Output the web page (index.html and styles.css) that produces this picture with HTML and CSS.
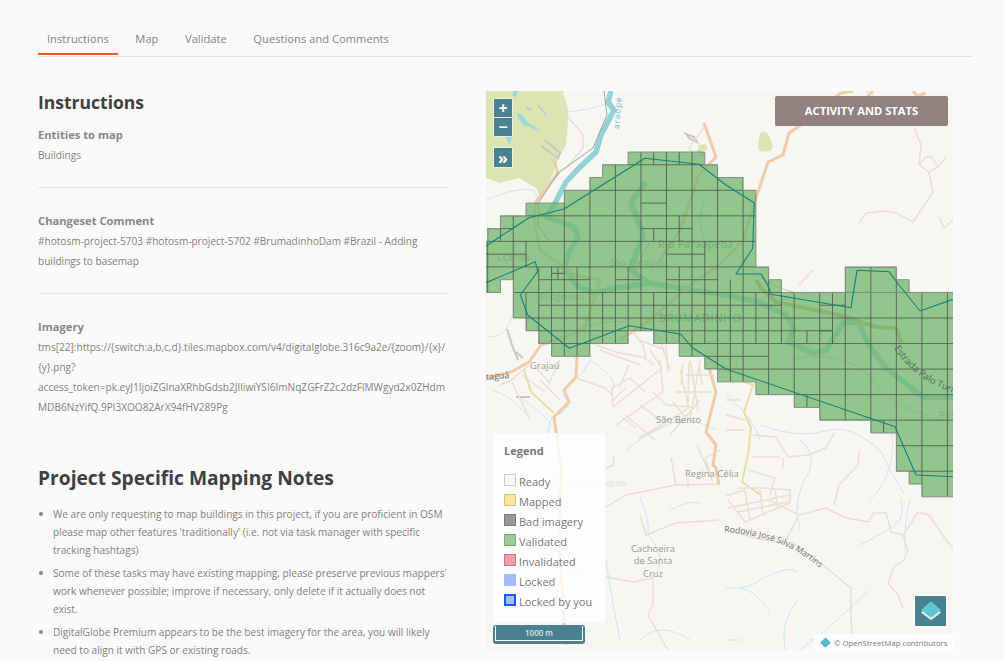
FILE: index.html
```html
<!DOCTYPE html>
<html lang="en">
<head>
    <meta charset="UTF-8">
    <title>Project - Instructions</title>
    <link rel="stylesheet" href="styles.css">
</head>
<body>
    <div class="page">
        <nav class="tabs">
            <a class="tab active">Instructions</a>
            <a class="tab">Map</a>
            <a class="tab">Validate</a>
            <a class="tab">Questions and Comments</a>
        </nav>
        <div class="main">
            <section class="details">
                <h2 class="title">Instructions</h2>
                <div class="block">
                    <h4>Entities to map</h4>
                    <p>Buildings</p>
                </div>
                <div class="block">
                    <h4>Changeset Comment</h4>
                    <p>#hotosm-project-5703 #hotosm-project-5702 #BrumadinhoDam #Brazil - Adding buildings to basemap</p>
                </div>
                <div class="block last">
                    <h4>Imagery</h4>
                    <p class="imagery">tms[22]:https://{switch:a,b,c,d}.tiles.mapbox.com/v4/digitalglobe.316c9a2e/{zoom}/{x}/<br>{y}.png?<br>access_token=pk.eyJ1IjoiZGlnaXRhbGdsb2JlIiwiYSI6ImNqZGFrZ2c2dzFlMWgyd2x0ZHdm<br>MDB6NzYifQ.9Pl3XOO82ArX94fHV289Pg</p>
                </div>
                <h2 class="title notes-title">Project Specific Mapping Notes</h2>
                <ul class="notes">
                    <li>We are only requesting to map buildings in this project, if you are proficient in OSM please map other features 'traditionally' (i.e. not via task manager with specific tracking hashtags)</li>
                    <li>Some of these tasks may have existing mapping, please preserve previous mappers' work whenever possible; improve if necessary, only delete if it actually does not exist.</li>
                    <li>DigitalGlobe Premium appears to be the best imagery for the area, you will likely need to align it with GPS or existing roads.</li>
                </ul>
            </section>

            <div class="map">
                <svg class="map-canvas" viewBox="486 91 467 559" width="467" height="559">
                    <defs>
                        <path id="tiles" d="M11 0H17V1H18V2H20V3H21V9H22V10H23V11H38V27H34V26H33V25H32V22H30V21H26V20H24V19H21V18H18V17H17V16H15V15H13V14H11V15H8V16H5V15H4V14H3V13H2V10H1V11H-1V7H0V6H1V5H3V4H6V3H8V2H9V1H11ZM28 9H32V10H33V11H28Z"/>
                        <clipPath id="tile-clip"><use href="#tiles"/></clipPath>
                    </defs>

                    <!-- base map -->
                    <rect x="486" y="91" width="467" height="559" fill="#f7f6f2"/>
                    <path class="forest" d="M486 91H562Q570 108 568 122L566 145 558 160 554 172 541 198 536 188 519 178 499 183 486 178Z"/>
                    <path class="forest" d="M760 133Q766 130 769 136L773 146Q772 153 765 151 760 153 758 147Z"/>
                    <path class="forest" d="M698 145L706 144 708 150 700 151Z"/>
                    <path class="lake" d="M514 91H518L516 97 512 95ZM516 113L522 115 528 123 535 127 539 131 530 127 523 125 519 119ZM508 114L514 116 512 122 506 120ZM506 136L512 137 509 145Z"/>
                    <path class="compound" d="M526 108L532 110M545 140L560 153 558 158 541 146M538 105L546 115M498 130L504 135M686 134L694 137 697 142 690 139ZM502 153L508 155M698 150L704 156M507 329L512 345 518 360M516 352L523 358M516 397H530"/>

                    <path class="stream" d="M566 112Q590 110 606 104M486 200Q520 186 533 190 540 197 537 205M486 336Q505 340 512 316M592 355Q586 372 572 382 556 394 570 402 564 415 552 417 546 430 550 440M520 398Q540 410 552 425M492 390Q510 395 526 414M590 360Q620 380 612 390M626 450Q650 430 680 420M660 420Q690 416 716 430M640 497Q650 520 648 535 670 560 652 578M670 510Q690 500 700 503M640 640Q660 620 690 640M620 640Q610 590 606 560M727 395Q755 420 760 440M760 425Q800 440 830 430 850 425 880 450 895 480 905 495M800 440Q815 450 810 470 790 500 800 530M890 420Q900 470 870 500M726 588Q750 590 763 578 790 565 798 572M740 588Q755 590 770 612M798 600Q780 620 785 650M800 650Q840 620 868 590M810 640Q850 635 860 650M860 545Q890 530 900 520 905 505 900 500M910 500Q904 520 905 550M726 640H740"/>
                    <path class="river" d="M611 91L608 102 614 110 601 135 596 152 579 168 566 182 554 205 546 217 574 227 578 238 569 252 564 268 576 285 593 293 616 288 650 283 690 290 726 295 759 302 786 315 794 328 788 342 813 353 826 350 843 323 858 322 869 345 886 368 923 397H953"/>
                    <path class="river" d="M646 182L631 202 643 235 630 270 650 283"/>
                    <path class="road-major" d="M853 91L841 93 798 127 789 133 783 155 768 162 756 198 743 240 720 264 690 285 650 320 620 340"/>
                    <path class="road-major" d="M704 123L716 157 699 175 680 230 660 260"/>
                    <path class="road-major" d="M554 160L558 173 536 202 534 218 540 250 575 275 600 280 584 330 541 345 529 362 511 372 486 378"/>
                    <path class="road-major" d="M577 357L576 377 564 390 569 402 554 417 556 432 561 465 560 560 566 645"/>
                    <path class="road-major" d="M709 368L716 392 706 432 716 445 713 465 716 468 719 485"/>
                    <path class="road-major" d="M913 91L917 96 926 93M873 91L866 98"/>
                    <path class="road-olive" d="M756 280L761 288 776 302 839 315 876 327 896 328 901 342"/>
                    <path class="road-yellow" d="M524 370L531 392 554 413M735 362L745 382 753 385 744 412 751 428 748 455 742 482 761 495"/>
                    <path class="road-minor" d="M563 91L561 108 583 135 583 148 566 168M689 148L704 127M689 148L700 165M914 127L921 145 919 165 929 172 933 192 913 222 896 213 883 211 866 213 859 223M919 165L926 157H932L938 167 929 172M938 167L946 157M939 217L944 228 953 220M866 91L873 95M799 285L813 270M612 388L613 407 662 368 650 350M616 425L663 392 660 360M639 438L689 408 680 370M612 388L630 378 645 392M600 350L640 365M640 340L665 350M650 310L670 370M690 360L698 410M700 360L690 420M685 375H715M676 392H712M670 435L700 400M625 415L655 440M640 405L660 420M697 445L712 480 705 458 720 450M540 380L560 400M512 382L530 420M522 375L545 392M560 360L548 385M500 385L515 378M576 378L605 388 612 395M596 345L619 353 643 357 654 365M633 332L643 345 646 360M666 345L668 372M653 392L666 405 693 407M629 365L619 388M626 388L613 400M683 362L681 385M689 362L688 402M699 365L702 385M673 402L686 418M623 418L636 428M639 438L666 425M509 382L529 365M549 382L536 368M606 507L626 495 676 485 719 484M671 458L676 485M688 478V487M646 535L676 523 719 520M646 535L640 515M606 577L633 582 653 578 653 605 648 615 663 642 668 650M613 455L614 465 606 468M769 500L799 515 826 508 846 518 869 522 873 513H886L891 532 903 535 918 512 929 515 946 540 953 548M903 535L908 550 904 560 894 567 888 583 898 595 903 608M798 517L786 540M726 530L763 540 793 543 823 565 851 588 851 617 853 650M753 435L776 437 788 457 808 455 826 448 834 433M783 458V468M859 450L858 465 839 485 834 505M738 488H765L790 490 790 503 745 522 728 500M745 490L750 520M760 490L763 515M775 490L778 508M728 508L790 495M738 512L788 502M726 496L745 490M752 457H780M748 470L775 478 770 495M726 430H745M726 415L745 420M726 400H740"/>
                    <path class="rail" d="M604 91L607 115 593 148 558 173 539 202 538 225 548 240"/>
                    <path class="outline-thin" d="M790 360Q850 345 880 390L900 405 953 425M630 290Q640 250 660 230M705 200Q690 230 720 260M735 250Q760 290 810 295M575 330Q600 320 625 322M660 320L690 345 720 340"/>

                    <text class="label" x="530" y="369">Grajaú</text>
                    <text class="label dark" x="486" y="380" transform="rotate(-5 486 380)">taguá</text>
                    <text class="label" x="656" y="423">São Bento</text>
                    <text class="label" x="685" y="477">Regina Célia</text>
                    <text class="label" x="653" y="552" text-anchor="middle">Cachoeira</text>
                    <text class="label" x="653" y="564" text-anchor="middle">de Santa</text>
                    <text class="label" x="653" y="577" text-anchor="middle">Cruz</text>
                    <text class="label faint" x="548" y="486">Afonso Henriques</text>
                    <text class="label faint" x="560" y="577">Soares</text>
                    <text class="label" x="540" y="300">Progresso</text>
                    <text class="label" x="497" y="261">COHAB</text>
                    <text class="label" x="610" y="266">São Conrado</text>
                    <text class="label river-name" x="658" y="248">Rio Paraopeba</text>
                    <text class="label town" x="659" y="322">BRUMADINHO</text>
                    <text class="label" x="939" y="418">Pires</text>
                    <text class="label lake-name" x="0" y="0" transform="translate(619 129) rotate(-85)">araope</text>
                    <path id="rodovia" d="M724 532Q785 536 822 570"/>
                    <text class="label road-name"><textPath href="#rodovia">Rodovia José Silva Martins</textPath></text>

                    <!-- task grid: one unit is one task at the deepest split -->
                    <g transform="translate(487.7 152) scale(12.77)">
                        <use href="#tiles" class="tile-fill"/>
                        <g clip-path="url(#tile-clip)">
                            <path class="grid" d="M0 0V27M2 0V27M4 9V27M6 0V27M8 0V27M10 0V27M12 0V27M14 0V27M16 0V27M18 0V27M20 0V27M22 0V27M24 0V27M26 0V27M28 0V27M30 0V27M32 0V27M34 0V27M36 0V27M-1 1H38M-1 3H38M-1 5H38M-1 7H38M-1 9H38M-1 11H38M-1 13H38M-1 15H38M-1 17H38M-1 19H38M-1 21H38M-1 23H38M-1 25H38"/>
                            <path class="grid" d="M13 0V1M15 0V1M12 4H14M12 6H16M13 6V7M15 5V7M0 6H2M1 5V7M3 7V9M-1 8H3M14 8H17M17 7V9M5 9V11M7 9V11M5 9.5H6M5.5 9V10M4 10H8M10 10H12M11 9V11M14 10H18M15 9V11M17 9V11M3 11V15M5 11V16M7 11V16M9 11V15M11 11V15M13 11V15M15 11V15M17 11V15M19 10V18M21 11V15M23 11V15M25 14V15M27 11V15M4 12H23M26 12H28M3 14H27M8 16H9M17 16H22M25 19V20M31 21V22M26 14H27"/>
                        </g>
                        <use href="#tiles" class="tile-line"/>
                    </g>
                    <path id="estrada" d="M894 348Q912 378 953 393"/>
                    <text class="label road-name on-tile"><textPath href="#estrada">Estrada Palo Turis</textPath></text>
                    <path class="aoi" d="M486 246L529 217.700 564 209 645 158.300 699 164.300 726 185 754.300 203 752.700 248.300 736 274H761L767.700 285 771 294.300 851 307.700 857 270.300 889 271.700 899 285 920 311 953 299.300M953 476.700L916 475 895 426.700 726 369 692.700 348 681 334.300 629.300 325.700 569.300 348.300 527.700 315 520.300 295 527.700 285 537.700 271.700 535.300 261.700 486 282.700"/>
                </svg>

                <div class="zoom-control">
                    <button class="map-btn">+</button>
                    <button class="map-btn">&minus;</button>
                </div>
                <button class="map-btn expand">&raquo;</button>
                <button class="stats-btn">Activity and stats</button>

                <div class="legend">
                    <h5>Legend</h5>
                    <div class="legend-row"><span class="swatch ready"></span>Ready</div>
                    <div class="legend-row"><span class="swatch mapped"></span>Mapped</div>
                    <div class="legend-row"><span class="swatch bad"></span>Bad imagery</div>
                    <div class="legend-row"><span class="swatch validated"></span>Validated</div>
                    <div class="legend-row"><span class="swatch invalidated"></span>Invalidated</div>
                    <div class="legend-row"><span class="swatch locked"></span>Locked</div>
                    <div class="legend-row"><span class="swatch locked-you"></span>Locked by you</div>
                </div>

                <div class="scale"><span>1000 m</span></div>

                <button class="layers-btn">
                    <svg width="22" height="22" viewBox="0 0 22 22">
                        <path d="M11 4L21 12.500 12 19.500Q11 20 10 19.500L1 12.500Z" fill="#e8eeee"/>
                        <path d="M10 2Q11 1.500 12 2L21 10 12 17Q11 17.500 10 17L1 10Z" fill="#5cc6d3"/>
                    </svg>
                </button>

                <div class="attribution">
                    <svg width="11" height="11" viewBox="0 0 22 22">
                        <path d="M11 3L21 12 11 21 1 12Z" fill="#7f8d8f"/>
                        <path d="M11 1L21 10 11 19 1 10Z" fill="#52bfd0"/>
                    </svg>
                    <span>© OpenStreetMap contributors</span>
                </div>
            </div>
        </div>
    </div>
</body>
</html>
```

FILE: styles.css
```css
html, body {
    height: 100%;
    margin: 0;
    overflow: hidden;
}
body {
    font-family: "Open Sans", Arial, sans-serif;
    background: #fafafa;
    color: #86807d;
}
.page {
    width: 934px;
    margin-left: 38px;
}

/* tabs */
.tabs {
    display: flex;
    height: 56px;
    border-bottom: 1px solid #e4e4e4;
}
.tab {
    height: 55px;
    padding: 31px 9px 0;
    box-sizing: border-box;
    margin-right: 8.500px;
    font-size: 11.200px;
    line-height: 15px;
    color: #8a8382;
    border-bottom: 2px solid transparent;
}
.tab.active {
    border-bottom-color: #f15a24;
}

.main {
    display: flex;
    padding-top: 34px;
}

/* left column */
.details {
    width: 411px;
    flex: none;
    margin-top: -1px;
}
.title {
    font-size: 17.500px;
    line-height: 24px;
    font-weight: 700;
    color: #3f3f3f;
    margin: 0;
}
.block {
    padding: 0 0 22px;
    margin-bottom: 23px;
    border-bottom: 1px solid #e6e6e6;
}
.block:first-of-type {
    margin-top: 11px;
}
.block.last {
    border-bottom: none;
    margin-bottom: 0;
}
.block h4 {
    font-size: 11.200px;
    line-height: 20px;
    font-weight: 700;
    color: #8c8583;
    margin: 0;
}
.block p {
    font-size: 10.080px;
    line-height: 20px;
    margin: 0;
}
.block p.imagery {
    white-space: nowrap;
}
.notes-title {
    font-size: 19.200px;
    margin-top: 27px;
}
.notes {
    font-size: 10.080px;
    line-height: 18px;
    margin: 15px 0 0;
    padding-left: 15px;
    list-style: none;
}
.notes li {
    margin-bottom: 5px;
    position: relative;
}
.notes li::before {
    content: "";
    position: absolute;
    left: -14px;
    top: 7px;
    width: 4px;
    height: 4px;
    border-radius: 50%;
    background: #8b8583;
}

/* map */
.map {
    position: relative;
    width: 467px;
    height: 559px;
    margin-left: 37px;
    flex: none;
}
.map-canvas {
    display: block;
}
.map-canvas > path {
    fill: none;
}
.map-canvas .forest {
    fill: #dbe5b4;
}
.map-canvas .lake {
    fill: #9fd6dc;
}
.map-canvas .compound {
    stroke: #c9c7bf;
    stroke-width: 2;
}
.map-canvas .stream {
    stroke: #cfe7e8;
    stroke-width: 1;
}
.map-canvas .river {
    stroke: #93d2d5;
    stroke-width: 5.500;
    stroke-linejoin: round;
}
.map-canvas .road-major {
    stroke: #efcba8;
    stroke-width: 3;
    stroke-linejoin: round;
}
.map-canvas .road-olive {
    stroke: #c4b27c;
    stroke-width: 4;
    stroke-linejoin: round;
}
.map-canvas .road-yellow {
    stroke: #dfe3a2;
    stroke-width: 2;
    stroke-linejoin: round;
}
.map-canvas .road-minor {
    stroke: #e5e0cf;
    stroke-width: 1.400;
    stroke-linejoin: round;
}
.map-canvas .rail {
    stroke: #a3a19c;
    stroke-width: 1;
}
.map-canvas .outline-thin {
    stroke: #b7b6a5;
    stroke-width: 0.800;
}
.label {
    font-size: 9.500px;
    fill: #9a9a98;
}
.label.dark {
    fill: #6f6f6f;
    font-size: 9px;
}
.label.road-name {
    fill: #6f6f6f;
    font-size: 8.600px;
}
.label.on-tile {
    fill: #4f6d52;
    font-size: 9.500px;
}
.label.faint {
    fill: #e4e2de;
}
.label.river-name {
    fill: #5e9d6f;
    font-size: 10.500px;
    letter-spacing: 0.300px;
}
.label.town {
    fill: #5e8a62;
    font-size: 11px;
    letter-spacing: 0.800px;
}
.label.lake-name {
    fill: #5cb8bf;
    font-size: 8px;
    letter-spacing: 1px;
}
#tiles {
    vector-effect: non-scaling-stroke;
}
.tile-fill {
    fill: #71b66d;
    fill-opacity: 0.75;
    stroke: none;
}
.grid {
    fill: none;
    stroke: #4b5a4b;
    stroke-opacity: 0.85;
    stroke-width: 1px;
    vector-effect: non-scaling-stroke;
}
.tile-line {
    fill: none;
    stroke: #7f8f7f;
    stroke-width: 1px;
}
.map-canvas .aoi {
    stroke: #167f78;
    stroke-width: 1.100;
    stroke-linejoin: round;
}

.map-btn {
    display: block;
    width: 18px;
    height: 18px;
    padding: 0;
    border: none;
    background: #4a818f;
    color: #fff;
    font-family: "Open Sans", Arial, sans-serif;
    font-weight: 700;
    font-size: 16px;
    line-height: 16px;
    text-align: center;
}
.zoom-control {
    position: absolute;
    left: 7px;
    top: 7px;
    display: flex;
    flex-direction: column;
    gap: 1px;
    padding: 1px;
    border-radius: 2px;
    background: rgba(255, 255, 255, 0.5);
}
.expand {
    position: absolute;
    left: 8px;
    top: 57px;
    height: 19px;
    box-shadow: 0 0 0 1px rgba(255, 255, 255, 0.5);
}
.stats-btn {
    position: absolute;
    left: 289px;
    top: 5px;
    width: 173px;
    height: 30px;
    padding: 0 0 2px;
    border: none;
    border-radius: 2px;
    background: #91827f;
    color: #fff;
    font-family: "Open Sans", Arial, sans-serif;
    font-size: 11.200px;
    font-weight: 700;
    text-transform: uppercase;
}

.legend {
    position: absolute;
    left: 7px;
    top: 342px;
    width: 112px;
    height: 190px;
    box-sizing: border-box;
    padding: 9px 11px;
    border-radius: 3px;
    background: rgba(255, 255, 255, 0.8);
    color: #7b7676;
}
.legend h5 {
    font-size: 11px;
    line-height: 18px;
    font-weight: 700;
    margin: 0 0 11px;
}
.legend-row {
    display: flex;
    align-items: center;
    gap: 3px;
    height: 20px;
    font-size: 11px;
}
.swatch {
    width: 12px;
    height: 12px;
    box-sizing: border-box;
    border: 1px solid #ccc;
    margin-top: -3px;
}
.swatch.ready { background: #f8f8f8; border-color: #ccc; }
.swatch.mapped { background: #ffe49c; border-color: #d5c084; }
.swatch.bad { background: #989898; border-color: #7a7a7a; }
.swatch.validated { background: #9ccb96; border-color: #7fa97b; }
.swatch.invalidated { background: #f49db2; border-color: #c07d8f; }
.swatch.locked { background: #a3bcf2; border-color: #a3bcf2; }
.swatch.locked-you { background: #a3bcf2; border: 2px solid #1a5ee8; }

.scale {
    position: absolute;
    left: 7px;
    top: 534px;
    width: 92px;
    height: 19px;
    box-sizing: border-box;
    padding: 1px 2px 2px;
    border-radius: 3px;
    background: #4a818f;
}
.scale span {
    display: block;
    height: 15px;
    box-sizing: border-box;
    border: 1px solid #fff;
    border-top: none;
    color: #dbe6e9;
    font-size: 8px;
    font-weight: 600;
    line-height: 14px;
    text-align: center;
}
.layers-btn {
    position: absolute;
    left: 429px;
    top: 505px;
    width: 31px;
    height: 30px;
    padding: 0;
    border: none;
    border-radius: 1px;
    background: #4a818f;
    display: flex;
    align-items: center;
    justify-content: center;
    box-shadow: 0 0 0 2px rgba(255, 255, 255, 0.5);
}
.attribution {
    position: absolute;
    left: 328px;
    top: 543px;
    width: 140px;
    height: 17px;
    display: flex;
    align-items: center;
    gap: 3px;
    padding-left: 6px;
    box-sizing: border-box;
    background: rgba(255, 255, 255, 0.8);
    color: #7a7a7a;
    font-size: 7.800px;
    white-space: nowrap;
}
```
